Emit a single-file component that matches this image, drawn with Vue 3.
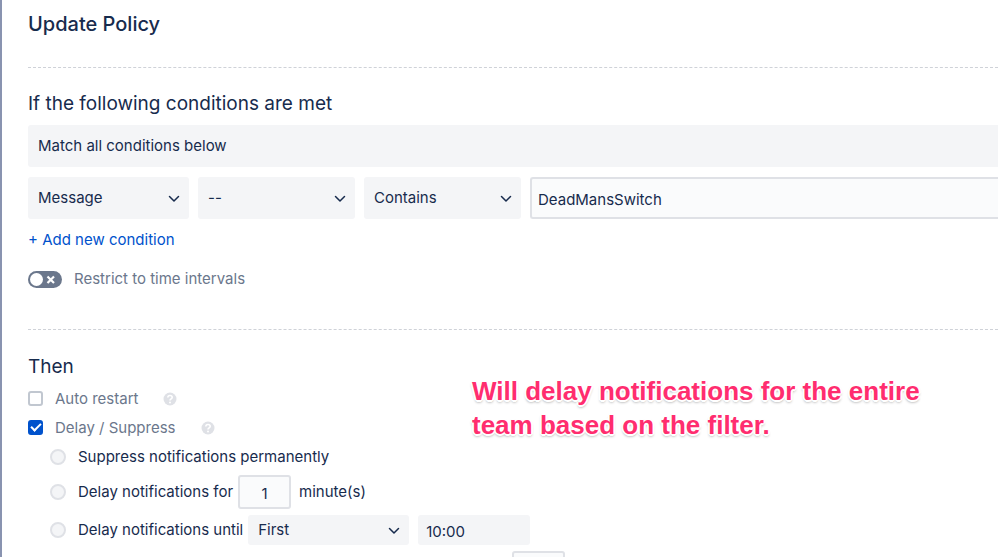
<template>
  <main class="policy">
    <h1 class="title">Update Policy</h1>

    <section class="section conditions">
      <h2>If the following conditions are met</h2>
      <button type="button" class="match">Match all conditions below</button>

      <div class="condition-row">
        <div
          v-for="field in fields"
          :key="field.label"
          :class="['select-box', field.size]"
        >
          <select v-model="field.value" :aria-label="field.label">
            <option>{{ field.value }}</option>
          </select>
          <svg class="chevron" viewBox="0 0 12 8" aria-hidden="true">
            <path d="M1.5 1.5 6 6l4.500-4.500" />
          </svg>
        </div>
        <input
          v-model="keyword"
          class="text-input keyword"
          type="text"
          aria-label="Value"
        />
      </div>

      <a href="#" class="add-link" @click.prevent>+ Add new condition</a>

      <label class="toggle-row">
        <input v-model="restricted" type="checkbox" class="sr-only" />
        <svg class="toggle" viewBox="0 0 34 17" aria-hidden="true">
          <rect width="34" height="17" rx="8.500" fill="#6b778c" />
          <circle cx="8.500" cy="8.500" r="6.500" fill="#fff" />
          <path d="M19.500 5.500l6.500 6.500M26 5.500l-6.500 6.500" stroke="#fff" stroke-width="2.200" />
        </svg>
        <span>Restrict to time intervals</span>
      </label>
    </section>

    <section class="section actions">
      <h2>Then</h2>

      <div v-for="action in actions" :key="action.id" class="action-row">
        <input :id="action.id" v-model="action.checked" type="checkbox" class="check" />
        <label :for="action.id">{{ action.label }}</label>
        <svg class="help" viewBox="0 0 14 14" role="img" aria-label="Help">
          <circle cx="7" cy="7" r="6.500" fill="#dfe1e6" />
          <path
            d="M4.800 5.600c0-1.300.9-2.100 2.200-2.100s2.200.8 2.200 2c0 1.400-2.200 1.400-2.200 3"
            fill="none"
            stroke="#fff"
            stroke-width="1.600"
          />
          <circle cx="7" cy="10.500" r="1" fill="#fff" />
        </svg>
      </div>

      <div class="delay-options">
        <div class="option-row">
          <input id="permanent" v-model="mode" type="radio" name="mode" value="permanent" />
          <label for="permanent">Suppress notifications permanently</label>
        </div>
        <div class="option-row tall">
          <input id="duration" v-model="mode" type="radio" name="mode" value="duration" />
          <label for="duration">Delay notifications for</label>
          <input v-model="minutes" class="text-input count" type="text" aria-label="Minutes" />
          <span>minute(s)</span>
        </div>
        <div class="option-row tall">
          <input id="until" v-model="mode" type="radio" name="mode" value="until" />
          <label for="until">Delay notifications until</label>
          <div class="select-box small">
            <select v-model="day" aria-label="Day">
              <option>First</option>
            </select>
            <svg class="chevron" viewBox="0 0 12 8" aria-hidden="true">
              <path d="M1.5 1.5 6 6l4.500-4.500" />
            </svg>
          </div>
          <input v-model="time" class="time" type="text" aria-label="Time" />
        </div>
        <div class="option-row limit">
          <input v-model="limit" class="text-input count" type="text" aria-label="Limit" />
        </div>
      </div>
    </section>

    <p class="note">Will delay notifications for the entire<br />team based on the filter.</p>
  </main>
</template>

<script setup>
import { ref } from 'vue'

const fields = ref([
  { label: 'Field', value: 'Message', size: 'wide' },
  { label: 'Negation', value: '--', size: '' },
  { label: 'Operator', value: 'Contains', size: '' },
])
const actions = ref([
  { id: 'restart', label: 'Auto restart', checked: false },
  { id: 'delay', label: 'Delay / Suppress', checked: true },
])
const keyword = ref('DeadMansSwitch')
const restricted = ref(false)
const mode = ref('')
const minutes = ref('1')
const day = ref('First')
const time = ref('10:00')
const limit = ref('')
</script>

<style>
html,
body {
  height: 100%;
  margin: 0;
  overflow: hidden;
  background: #fff;
}
</style>

<style scoped>
.policy,
.policy * {
  box-sizing: border-box;
}

.policy {
  position: relative;
  min-height: 100vh;
  padding: 12px 0 0 26px;
  border-left: 2px solid #8993b0;
  color: #172b4d;
  font-family: Inter, "Liberation Sans", sans-serif;
  font-size: 15px;
  line-height: 20px;
}

button,
input,
select {
  margin: 0;
  color: inherit;
  font: inherit;
}

.title {
  margin: 0 0 31px;
  font-size: 20px;
  font-weight: 500;
  line-height: 24px;
}

.section {
  border-top: 1px dashed #cfd2d8;
}

.conditions {
  padding: 24px 0 40px;
}

.actions {
  padding-top: 25px;
}

h2 {
  margin: 0;
  font-size: 19px;
  font-weight: 400;
  line-height: 24px;
}

.match {
  display: block;
  width: 100%;
  height: 42px;
  margin: 9px 0 10px;
  padding: 0 10px;
  border: 0;
  border-radius: 3px 0 0 3px;
  background: #f4f5f7;
  text-align: left;
}

.condition-row {
  display: flex;
  gap: 9px;
}

.select-box {
  position: relative;
  flex: none;
  width: 157px;
  height: 42px;
}

.select-box.wide {
  width: 161px;
}

.select-box.small {
  width: 161px;
  height: 30px;
}

select {
  width: 100%;
  height: 100%;
  padding: 0 30px 0 10px;
  border: 0;
  border-radius: 3px;
  background: #f4f5f7;
  appearance: none;
}

.chevron {
  position: absolute;
  top: 50%;
  right: 9px;
  width: 12px;
  height: 8px;
  margin-top: -3px;
  fill: none;
  stroke: #172b4d;
  stroke-width: 1.5px;
  stroke-linecap: round;
  stroke-linejoin: round;
  pointer-events: none;
}

.text-input {
  border: 2px solid #dfe1e6;
  border-radius: 3px;
  background: #fafbfc;
}

.keyword {
  flex: 1;
  min-width: 0;
  height: 42px;
  padding: 2px 6px 0;
  border-right: 0;
  border-radius: 3px 0 0 3px;
}

.add-link {
  display: block;
  width: max-content;
  margin: 11px 0 19px;
  color: #0052cc;
  text-decoration: none;
}

.toggle-row {
  display: flex;
  align-items: center;
  gap: 12px;
  width: max-content;
  color: #6b778c;
}

.toggle {
  width: 34px;
  height: 17px;
}

.sr-only {
  position: absolute;
  width: 1px;
  height: 1px;
  opacity: 0;
}

.action-row {
  display: flex;
  align-items: center;
  height: 29px;
  color: #6b778c;
}

.actions h2 {
  margin-bottom: 5px;
}

.check {
  width: 15px;
  height: 15px;
  margin-right: 12px;
  border: 2px solid #c1c7d0;
  border-radius: 3px;
  background: #fff;
  appearance: none;
}

.check:checked {
  display: grid;
  place-items: center;
  border-color: #0052cc;
  background: #0052cc;
}

.check:checked::after {
  width: 8px;
  height: 4px;
  margin-bottom: 3px;
  border: solid #fff;
  border-width: 0 0 2px 2px;
  content: "";
  transform: rotate(-45deg);
}

.help {
  width: 14px;
  height: 14px;
  margin-left: 25px;
}

.delay-options {
  padding-left: 22px;
}

.option-row {
  display: flex;
  align-items: center;
  height: 29px;
  margin-bottom: 2px;
}

.option-row.tall {
  height: 38px;
  margin-bottom: 0;
}

input[type="radio"] {
  width: 16px;
  height: 16px;
  margin-right: 12px;
  border: 2px solid #dfe1e6;
  border-radius: 50%;
  background: #f4f5f7;
  appearance: none;
}

.count {
  width: 53px;
  height: 34px;
  margin: 0 8px 0 5px;
  padding: 2px 0 0;
  text-align: center;
}

.small {
  margin: 0 9px 0 5px;
}

.time {
  width: 112px;
  height: 30px;
  padding: 2px 8px 0;
  border: 0;
  border-radius: 3px;
  background: #f4f5f7;
}

.limit {
  height: 38px;
  padding-left: 457px;
}

.note {
  position: absolute;
  top: 374px;
  left: 470px;
  margin: 0;
  color: #ff2d6f;
  font-family: "Liberation Sans", sans-serif;
  font-size: 26px;
  font-weight: 700;
  line-height: 34px;
  white-space: nowrap;
  text-shadow:
    -2px 0 #fff,
    2px 0 #fff,
    0 -2px #fff,
    0 2px #fff,
    1px 1px #fff,
    -1px 1px #fff,
    0 2px 3px #888;
}
</style>
